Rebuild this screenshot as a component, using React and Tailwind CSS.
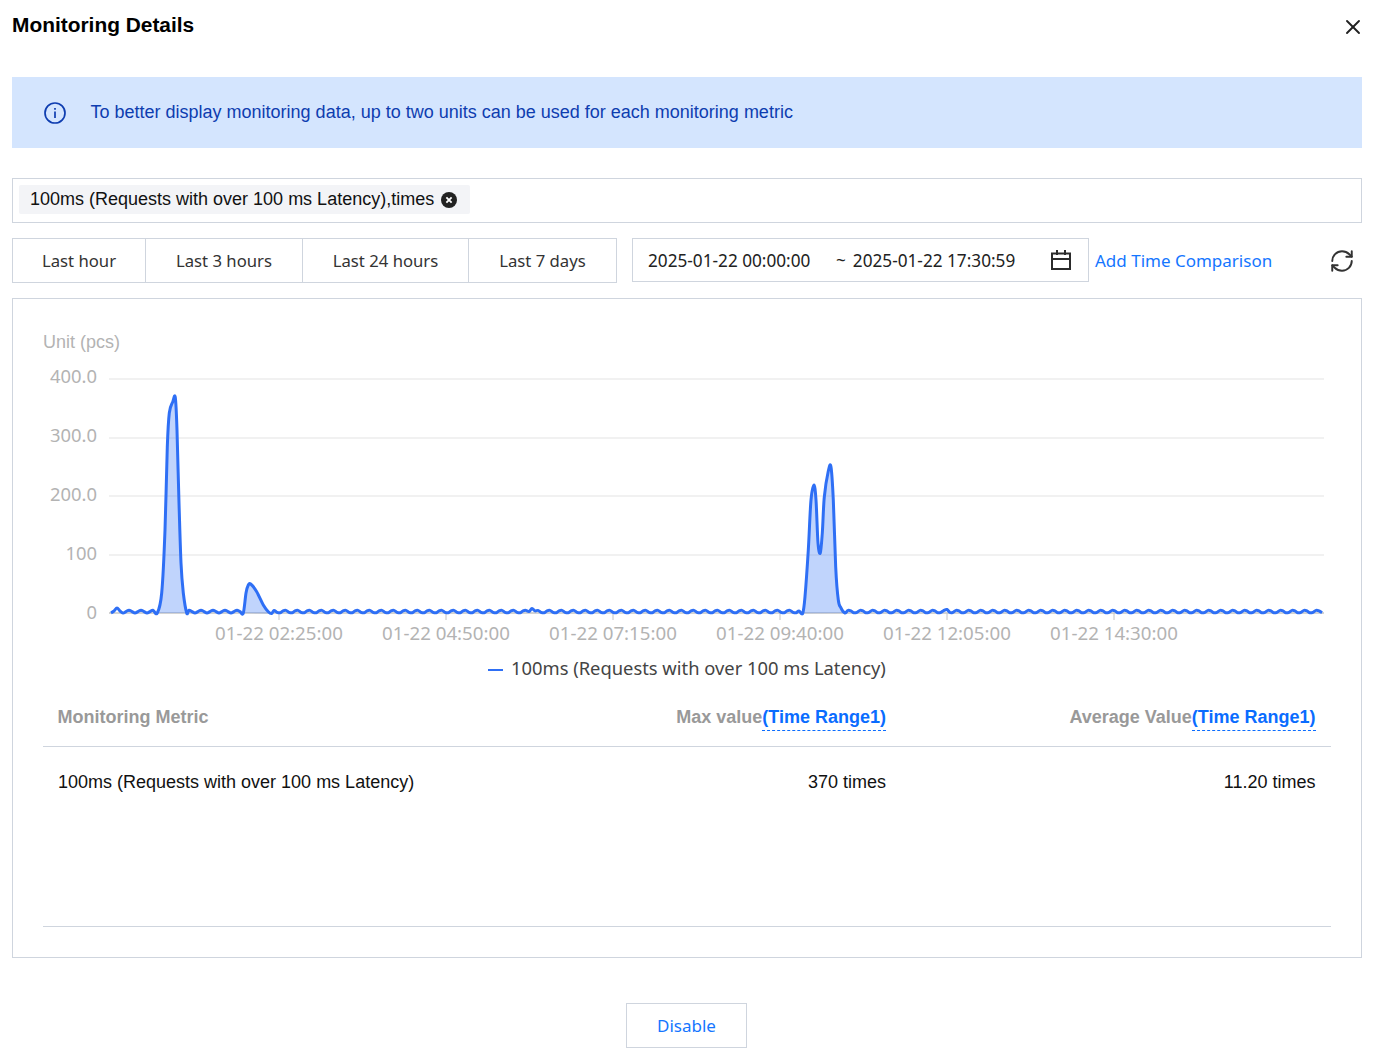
import React from "react";
import { X, RefreshCw } from "lucide-react";

const BASE = 613;

const PEAKS = [
  [[157.3, 613], [161.7, 593], [165, 530], [167.3, 447], [169.3, 413], [172.7, 402], [175.3, 397.5], [177, 430], [179, 503], [181, 563], [183.3, 593], [186.7, 613]],
  [[243.3, 613], [246, 593], [248.3, 585], [250.7, 584], [256.7, 591.7], [263.3, 605], [268.3, 611.7], [271.7, 613.5]],
  [[802.7, 613.3], [805, 596.7], [808.3, 550], [811, 500], [814, 485], [816, 500], [818, 543], [820.3, 553], [822.3, 533], [824.3, 497], [828.3, 471], [831, 467], [833.3, 500], [835.7, 567], [838.3, 600], [841, 608], [845, 613]],
];

// little bumps that stick out of the flat wave
const bumps = { 117: 5, 532: 4.5, 947: 3.5 };

const wave = (from, to) => {
  const pts = [];
  for (let x = from; x <= to; x += 3) {
    let y = BASE - 1.4 * (1 - Math.cos(((x - 111) / 12) * 2 * Math.PI));
    Object.keys(bumps).forEach((b) => {
      if (Math.abs(x - b) < 4) y = Math.min(y, BASE - bumps[b] + Math.abs(x - b));
    });
    pts.push([x, y]);
  }
  return pts;
};

const allPoints = [
  ...wave(111, 155),
  ...PEAKS[0],
  ...wave(189, 241),
  ...PEAKS[1],
  ...wave(274, 800),
  ...PEAKS[2],
  ...wave(848, 1322),
];

const smooth = (pts) => {
  let d = `M${pts[0][0]} ${pts[0][1]}`;
  for (let i = 0; i < pts.length - 1; i++) {
    const p0 = pts[i - 1] || pts[i];
    const p1 = pts[i];
    const p2 = pts[i + 1];
    const p3 = pts[i + 2] || p2;
    const c1x = p1[0] + (p2[0] - p0[0]) / 6;
    const c1y = p1[1] + (p2[1] - p0[1]) / 6;
    const c2x = p2[0] - (p3[0] - p1[0]) / 6;
    const c2y = p2[1] - (p3[1] - p1[1]) / 6;
    d += ` C${c1x.toFixed(1)} ${c1y.toFixed(1)} ${c2x.toFixed(1)} ${c2y.toFixed(1)} ${p2[0].toFixed(1)} ${p2[1].toFixed(1)}`;
  }
  return d;
};

const yTicks = [
  ["400.0", 379, 383],
  ["300.0", 438, 442],
  ["200.0", 496, 501],
  ["100", 555, 560],
  ["0", 613, 619],
];

const xTicks = [
  ["01-22 02:25:00", 279],
  ["01-22 04:50:00", 446],
  ["01-22 07:15:00", 613],
  ["01-22 09:40:00", 780],
  ["01-22 12:05:00", 947],
  ["01-22 14:30:00", 1114],
];

const Chart = () => {
  const font = { fontFamily: "'Noto Sans', sans-serif" };
  return (
    <svg viewBox="43 330 1288 360" className="block w-[1288px] h-[360px]" style={font}>
      <text x="43" y="348" fontSize="18" fill="#b3b3b3" fontFamily="'Liberation Sans', sans-serif">Unit (pcs)</text>
      {yTicks.map(([label, y, textY]) => (
        <g key={label}>
          <line x1="109" x2="1324" y1={y} y2={y} stroke={y === 613 ? "#c4c4c4" : "#ececec"} strokeWidth="1.5" />
          <text x="97" y={textY} textAnchor="end" fontSize="18.4" fill="#b3b3b3">{label}</text>
        </g>
      ))}
      {xTicks.map(([label, x]) => (
        <g key={label}>
          <line x1={x} x2={x} y1="613" y2="620" stroke="#c4c4c4" />
          <text x={x} y="640" textAnchor="middle" fontSize="18.7" fill="#b3b3b3">{label}</text>
        </g>
      ))}
      {PEAKS.map((p, i) => (
        <path key={i} d={smooth(p) + " Z"} fill="#2e6ff5" fillOpacity="0.3" />
      ))}
      <path d={smooth(allPoints)} fill="none" stroke="#2e6ff5" strokeWidth="3" strokeLinejoin="round" />
      <line x1="488" x2="503" y1="670" y2="670" stroke="#2e6ff5" strokeWidth="2" />
      <text x="511" y="675" fontSize="18.35" fill="#444444">100ms (Requests with over 100 ms Latency)</text>
    </svg>
  );
};

const ranges = [
  { label: "Last hour", w: "w-[132px]" },
  { label: "Last 3 hours", w: "w-[157px]" },
  { label: "Last 24 hours", w: "w-[166px]" },
  { label: "Last 7 days", w: "w-[148px]" },
];

const App = () => {
  return (
    <div className="w-[1374px] h-[1051px] overflow-hidden bg-white px-3 font-['Liberation_Sans',sans-serif] text-black">
      <div className="flex justify-between items-start h-[77px]">
        <h1 className="mt-[12px] text-[20.9px] leading-[26px] font-bold">Monitoring Details</h1>
        <X className="mt-[15px] mr-[-3px] text-[#222]" size={24} strokeWidth={1.9} />
      </div>

      <div className="h-[71px] bg-[#d4e5fe] flex items-center pl-[32px] text-[#0e3db0]">
        <svg width="22" height="22" viewBox="0 0 22 22" fill="none" stroke="currentColor" strokeWidth="1.7">
          <circle cx="11" cy="11" r="10" />
          <line x1="11" y1="9.5" x2="11" y2="16" />
          <line x1="11" y1="6" x2="11" y2="7.8" />
        </svg>
        <span className="ml-[24.5px] text-[18px]">To better display monitoring data, up to two units can be used for each monitoring metric</span>
      </div>

      <div className="mt-[30px] h-[45px] border border-[#cfd5de] flex items-start pt-[6px] pl-[6px]">
        <div className="h-[29px] w-[451px] bg-[#f3f4f7] rounded-[2px] flex items-center pl-[11px] text-[18px] text-[#111]">
          <span>100ms (Requests with over 100 ms Latency),times</span>
          <svg className="ml-[7px]" width="16" height="16" viewBox="0 0 14 14">
            <circle cx="7" cy="7" r="7" fill="#222" />
            <path d="M4.7 4.7 9.3 9.3M9.3 4.7 4.7 9.3" stroke="#fff" strokeWidth="1.6" />
          </svg>
        </div>
      </div>

      <div className="mt-[15px] h-[45px] flex items-center font-['Noto_Sans',sans-serif] text-[17px] text-[#333]">
        <div className="flex h-[45px] border border-[#cfd5de]">
          {ranges.map((r, i) => (
            <div key={r.label} className={`${r.w} flex items-center justify-center text-[16.7px] ${i > 0 ? "border-l border-[#cfd5de]" : ""}`}>
              {r.label}
            </div>
          ))}
        </div>
        <div className="ml-[15px] w-[457px] h-[44px] self-start border border-[#cfd5de] flex items-center pl-[15px] pt-[2px] text-[#222] text-[17.2px]">
          <span className="w-[188px]">2025-01-22 00:00:00</span>
          <span>~</span>
          <span className="ml-[7px]">2025-01-22 17:30:59</span>
          <svg className="ml-[35px] -mt-[2px]" width="22" height="22" viewBox="0 0 22 22" fill="none" stroke="#2b2b2b" strokeWidth="2">
            <rect x="2" y="4.5" width="18" height="15.5" />
            <line x1="2" y1="10" x2="20" y2="10" />
            <line x1="7" y1="1" x2="7" y2="6" />
            <line x1="15" y1="1" x2="15" y2="6" />
          </svg>
        </div>
        <span className="ml-[6px] whitespace-nowrap text-[17px] text-[#1476ff]">Add Time Comparison</span>
        <RefreshCw className="ml-auto mr-[7px] text-[#333]" size={26} strokeWidth={1.8} />
      </div>

      <div className="mt-[15px] h-[660px] border border-[#cfd5de] px-[30px] pt-[31px]">
        <Chart />
        <div className="mt-[7px] h-[50px] border-b border-[#cfd5de] flex items-start pt-[7px] pl-[14.5px] pr-[15.5px] text-[18px] font-bold text-[#999]">
          <span className="flex-1">Monitoring Metric</span>
          <span className="w-[429.5px] text-right">
            Max value<span className="text-[#0a6cff] border-b border-dashed border-[#0a6cff] pb-[3px]">(Time Range1)</span>
          </span>
          <span className="w-[429.5px] text-right">
            Average Value<span className="text-[#0a6cff] border-b border-dashed border-[#0a6cff] pb-[3px]">(Time Range1)</span>
          </span>
        </div>
        <div className="h-[180px] border-b border-[#cfd5de] flex items-start pt-[22px] pl-[15px] pr-[15.5px] text-[18px] text-[#111]">
          <span className="flex-1">100ms (Requests with over 100 ms Latency)</span>
          <span className="w-[429.5px] text-right">370 times</span>
          <span className="w-[429.5px] text-right">11.20 times</span>
        </div>
      </div>

      <div className="mt-[45px] flex justify-center pr-[1px]">
        <button className="w-[121px] h-[45px] border border-[#cfd5de] font-['Noto_Sans',sans-serif] text-[17px] text-[#1476ff]">Disable</button>
      </div>
    </div>
  );
};

export default App;
